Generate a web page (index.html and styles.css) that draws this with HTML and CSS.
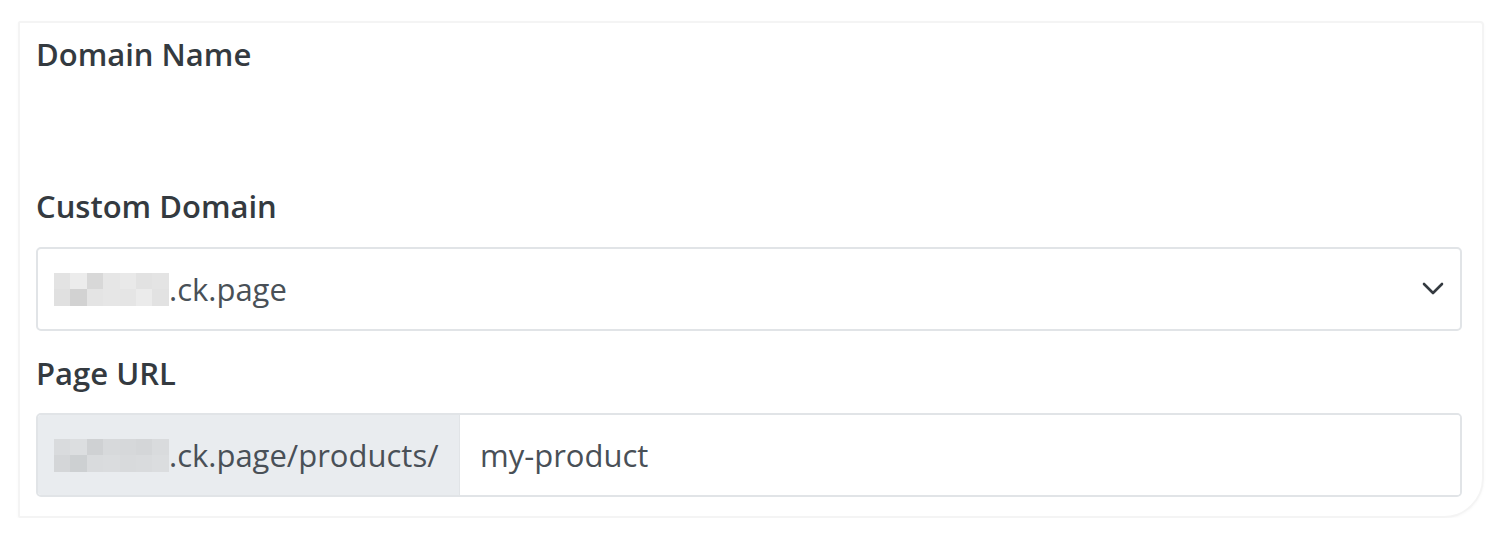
FILE: index.html
```html
<!DOCTYPE html>
<html>
<head>
<meta charset="utf-8">
<link rel="stylesheet" href="styles.css">
</head>
<body>
<div class="card">
  <div class="label">Domain Name</div>
  <div class="spacer"></div>
  <div class="label">Custom Domain</div>
  <div class="select">
    <div class="value">
      <span class="pix">
        <i style="background:#e3e3e3"></i><i style="background:#ececec"></i><i style="background:#d8d8d8"></i><i style="background:#e6e6e6"></i><i style="background:#e9e9e9"></i><i style="background:#e2e2e2"></i><i style="background:#e4e4e4"></i>
        <i style="background:#e0e0e0"></i><i style="background:#d2d2d2"></i><i style="background:#e4e4e4"></i><i style="background:#e6e6e6"></i><i style="background:#e5e5e5"></i><i style="background:#ebebeb"></i><i style="background:#e2e2e2"></i>
      </span>.ck.page
    </div>
    <svg class="chev" width="22" height="14" viewBox="0 0 22 14"><path d="M2 2 L11 11 L20 2" fill="none" stroke="#343a40" stroke-width="2.6" stroke-linecap="round" stroke-linejoin="round"/></svg>
  </div>
  <div class="label url-label">Page URL</div>
  <div class="group">
    <div class="addon">
      <span class="pix">
        <i style="background:#d9dbdd"></i><i style="background:#dcdee0"></i><i style="background:#cfd1d3"></i><i style="background:#d7d9db"></i><i style="background:#d6d8da"></i><i style="background:#d4d6d8"></i><i style="background:#d9dbdd"></i>
        <i style="background:#d4d6d8"></i><i style="background:#cdd0d2"></i><i style="background:#d9dbdd"></i><i style="background:#dadcde"></i><i style="background:#d8dadc"></i><i style="background:#d9dbdd"></i><i style="background:#dbdddf"></i>
      </span>.ck.page/products/
    </div>
    <div class="input">my-product</div>
  </div>
</div>
</body>
</html>
```

FILE: styles.css
```css
html, body {
  margin: 0;
  padding: 0;
  background: #ffffff;
}
body {
  padding: 21px 16px 0 18px;
  font-family: "Open Sans", "Liberation Sans", sans-serif;
}
.card {
  width: 1466px;
  height: 497px;
  box-sizing: border-box;
  border: 2px solid #f4f4f4;
  border-radius: 2px 4px 40px 2px;
  box-shadow: 0 1px 3px rgba(0,0,0,0.03);
  padding: 8px 20px 0 16px;
  display: flex;
  flex-direction: column;
}
.label {
  font-size: 31px;
  line-height: 46px;
  font-weight: 600;
  color: #343a40;
}
.spacer {
  height: 106px;
}
.select {
  margin-top: 18px;
  height: 84px;
  box-sizing: border-box;
  border: 2px solid #e1e4e7;
  border-radius: 5px;
  display: flex;
  align-items: center;
  justify-content: space-between;
  padding: 0 16px 0 16px;
}
.value, .addon, .input {
  font-size: 31px;
  color: #495057;
  display: flex;
  align-items: center;
}
.pix {
  display: grid;
  grid-template-columns: repeat(7, 16.4px);
  grid-template-rows: 16.5px 16.5px;
  width: 115px;
  height: 33px;
}
.pix i {
  display: block;
}
.chev {
  display: block;
}
.url-label {
  margin-top: 19px;
}
.group {
  margin-top: 17px;
  height: 84px;
  display: flex;
  box-sizing: border-box;
  border: 2px solid #e1e4e7;
  border-radius: 5px;
  overflow: hidden;
}
.addon {
  width: 422px;
  box-sizing: border-box;
  background: #e9ecef;
  border-right: 1px solid #e1e4e7;
  padding-left: 16px;
}
.input {
  flex: 1;
  padding-left: 20px;
  background: #fff;
}
```
